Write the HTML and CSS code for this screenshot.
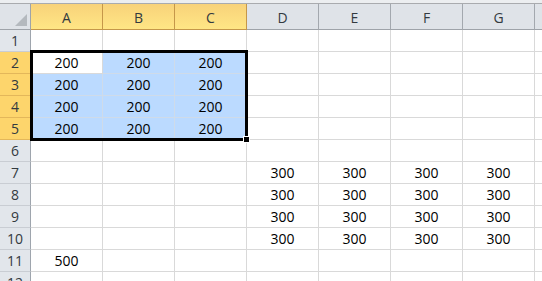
FILE: index.html
```html
<!DOCTYPE html>
<html>
<head>
<meta charset="utf-8">
<link rel="stylesheet" href="styles.css">
</head>
<body>
<div class="sheet">
  <div class="topband"></div>
  <div class="grid">
    <div class="corner"><svg class="tri" width="31" height="25" viewBox="0 0 31 25"><polygon points="27,10 27,22 15,22" fill="#b4b9be"/></svg></div>
    <div class="ch sel-h">A</div><div class="ch sel-h">B</div><div class="ch sel-h">C</div><div class="ch">D</div><div class="ch">E</div><div class="ch">F</div><div class="ch">G</div><div class="ch"></div>

    <div class="rh">1</div><div class="c"></div><div class="c"></div><div class="c"></div><div class="c"></div><div class="c"></div><div class="c"></div><div class="c"></div><div class="c"></div>
    <div class="rh sel-r">2</div><div class="c">200</div><div class="c s">200</div><div class="c s">200</div><div class="c"></div><div class="c"></div><div class="c"></div><div class="c"></div><div class="c"></div>
    <div class="rh sel-r">3</div><div class="c s">200</div><div class="c s">200</div><div class="c s">200</div><div class="c"></div><div class="c"></div><div class="c"></div><div class="c"></div><div class="c"></div>
    <div class="rh sel-r">4</div><div class="c s">200</div><div class="c s">200</div><div class="c s">200</div><div class="c"></div><div class="c"></div><div class="c"></div><div class="c"></div><div class="c"></div>
    <div class="rh sel-r">5</div><div class="c s">200</div><div class="c s">200</div><div class="c s">200</div><div class="c"></div><div class="c"></div><div class="c"></div><div class="c"></div><div class="c"></div>
    <div class="rh">6</div><div class="c"></div><div class="c"></div><div class="c"></div><div class="c"></div><div class="c"></div><div class="c"></div><div class="c"></div><div class="c"></div>
    <div class="rh">7</div><div class="c"></div><div class="c"></div><div class="c"></div><div class="c">300</div><div class="c">300</div><div class="c">300</div><div class="c">300</div><div class="c"></div>
    <div class="rh">8</div><div class="c"></div><div class="c"></div><div class="c"></div><div class="c">300</div><div class="c">300</div><div class="c">300</div><div class="c">300</div><div class="c"></div>
    <div class="rh">9</div><div class="c"></div><div class="c"></div><div class="c"></div><div class="c">300</div><div class="c">300</div><div class="c">300</div><div class="c">300</div><div class="c"></div>
    <div class="rh">10</div><div class="c"></div><div class="c"></div><div class="c"></div><div class="c">300</div><div class="c">300</div><div class="c">300</div><div class="c">300</div><div class="c"></div>
    <div class="rh">11</div><div class="c">500</div><div class="c"></div><div class="c"></div><div class="c"></div><div class="c"></div><div class="c"></div><div class="c"></div><div class="c"></div>
    <div class="rh">12</div><div class="c"></div><div class="c"></div><div class="c"></div><div class="c"></div><div class="c"></div><div class="c"></div><div class="c"></div><div class="c"></div>
  </div>
  <div class="selbox"></div>
  <div class="handle"></div>
</div>
</body>
</html>
```

FILE: styles.css
```css
html, body {
  margin: 0;
  padding: 0;
  background: #ffffff;
  overflow: hidden;
}
.sheet {
  position: relative;
  width: 542px;
  height: 281px;
  overflow: hidden;
  font-family: "Open Sans", "Liberation Sans", sans-serif;
  font-size: 14px;
}
.topband {
  height: 3px;
  background: #eceef0;
  border-bottom: 1px solid #a9abae;
}
.grid {
  display: grid;
  grid-template-columns: 31px repeat(8, 72px);
  grid-template-rows: 26px repeat(12, 22px);
  width: 607px;
}
.grid > div {
  box-sizing: border-box;
  display: flex;
  align-items: flex-end;
  justify-content: center;
  line-height: 20px;
}
.corner {
  background: #dfe3e8;
  border-right: 1px solid #9ea3a9;
  border-bottom: 1px solid #9ea3a9;
  position: relative;
}
.tri {
  position: absolute;
  left: 0;
  top: 0;
}
.ch {
  background: #dfe3e8;
  color: #333a40;
  border-right: 1px solid #a3a8ae;
  border-bottom: 1px solid #9ea3a9;
  line-height: 22px !important;
}
.ch.sel-h {
  background: linear-gradient(#f8d27a, #ffe685);
  border-right-color: #c5974a;
  border-bottom-color: #c5974a;
}
.rh {
  background: #e2e6eb;
  color: #333a40;
  border-right: 1px solid #9ea5ad;
  border-bottom: 1px solid #c9cdd3;
}
.rh.sel-r {
  background: #fdd56c;
  border-right-color: #c5974a;
  border-bottom-color: #e3b75a;
}
.c {
  color: #000000;
  border-right: 1px solid #d9d9d9;
  border-bottom: 1px solid #d9d9d9;
}
.c.s {
  background: #bbdaff;
  border-right-color: #cfdbe9;
  border-bottom-color: #cfdbe9;
}
.selbox {
  position: absolute;
  left: 30px;
  top: 50px;
  width: 212px;
  height: 85px;
  border: 3px solid #000000;
}
.handle {
  position: absolute;
  left: 243px;
  top: 136px;
  width: 5px;
  height: 5px;
  background: #000000;
  border: 1px solid #ffffff;
}
```
